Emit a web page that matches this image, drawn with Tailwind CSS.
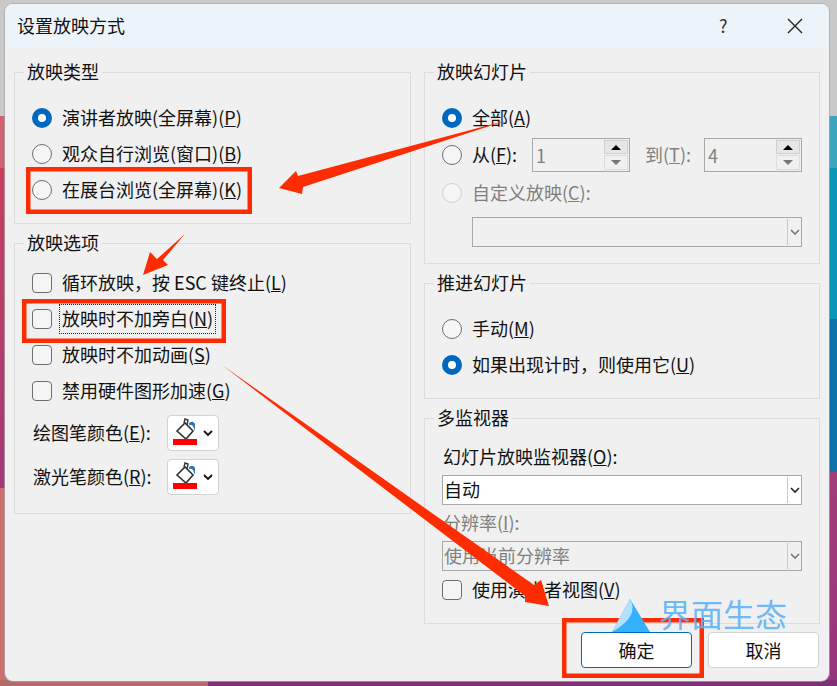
<!DOCTYPE html>
<html lang="zh-CN">
<head>
<meta charset="utf-8">
<script src="https://cdn.jsdelivr.net/npm/@tailwindcss/browser@4"></script>
</head>
<body class="relative w-[837px] h-[686px] overflow-hidden bg-[#c9c9c9] font-['Noto_Sans_CJK_SC','Noto_Sans',sans-serif] text-[18px] leading-[24px] text-[#111]">
  <!-- desktop wallpaper behind the window -->
  <div class="absolute left-0 top-[116px] w-[10px] h-[52px] bg-[#cf6272]"></div>
  <div class="absolute left-0 top-[168px] w-[10px] h-[320px] bg-[linear-gradient(#c8405f,#a03a78)]"></div>
  <div class="absolute left-0 top-[488px] w-[10px] h-[198px] bg-[#c9706c]"></div>
  <div class="absolute right-0 top-[116px] w-[12px] h-[52px] bg-[#3aa5bd]"></div>
  <div class="absolute right-0 top-[168px] w-[12px] h-[151px] bg-[#0a94b5]"></div>
  <div class="absolute right-0 top-[319px] w-[12px] h-[153px] bg-[#0a72a8]"></div>
  <div class="absolute right-0 top-[472px] w-[12px] h-[214px] bg-[linear-gradient(#a23d78,#96367e)]"></div>
  <div class="absolute left-0 top-[680px] w-[208px] h-[6px] bg-[#b56a6a]"></div>
  <div class="absolute left-[208px] right-0 top-[680px] h-[6px] bg-[#7f2f77]"></div>

  <!-- dialog -->
  <div class="absolute left-[4px] top-[3px] w-[826px] h-[679px] rounded-[9px] bg-[#a8a8a8]/70 p-px">
    <div class="w-full h-full rounded-[8px] overflow-hidden bg-[#f0f0f0] flex flex-col">
      <div class="h-[44px] shrink-0 bg-[#edf4f9] flex items-center pl-[12px] pb-[3px] relative">
        <span>设置放映方式</span>
        <span class="absolute left-[714px] top-[9px] text-[#333]">?</span>
        <svg class="absolute left-[781px] top-[13px]" width="18" height="18" viewBox="0 0 18 18"><path d="M2 2 L16 16 M16 2 L2 16" stroke="#222" stroke-width="1.4" fill="none"/></svg>
      </div>
      <div class="flex gap-[13px] pl-[9px] pt-[24px]">
        <!-- left column -->
        <div class="w-[397px] flex flex-col gap-[19px]">
          <section class="relative h-[152px] border border-[#dcdcdc] pl-[17px] pt-[27px]">
            <h2 class="absolute left-[9px] top-[-13px] px-[3px] bg-[#f0f0f0] font-normal leading-[22px] pb-[2px]">放映类型</h2>
            <div class="h-[36px] flex items-center gap-[10px]"><span class="w-[20px] h-[20px] rounded-full border-[6px] border-[#0067c0] bg-white"></span><span class="leading-[22px] pb-[2px]">演讲者放映(全屏幕)(<u>P</u>)</span></div>
            <div class="h-[36px] flex items-center gap-[10px]"><span class="w-[20px] h-[20px] rounded-full border-[1.5px] border-[#6e6e6e] bg-[#f5f5f5]"></span><span class="leading-[22px] pb-[2px]">观众自行浏览(窗口)(<u>B</u>)</span></div>
            <div class="h-[36px] flex items-center gap-[10px]"><span class="w-[20px] h-[20px] rounded-full border-[1.5px] border-[#6e6e6e] bg-[#f5f5f5]"></span><span class="leading-[22px] pb-[2px]">在展台浏览(全屏幕)(<u>K</u>)</span></div>
          </section>
          <section class="relative h-[271px] border border-[#dcdcdc] pl-[17px] pt-[21px]">
            <h2 class="absolute left-[9px] top-[-13px] px-[3px] bg-[#f0f0f0] font-normal leading-[22px] pb-[2px]">放映选项</h2>
            <div class="h-[36px] flex items-center gap-[10px]"><span class="w-[20px] h-[20px] rounded-[4px] border-[1.5px] border-[#6e6e6e] bg-[#f5f5f5]"></span><span class="leading-[22px] pb-[2px]">循环放映，按 ESC 键终止(<u>L</u>)</span></div>
            <div class="h-[36px] flex items-center gap-[10px]"><span class="w-[20px] h-[20px] rounded-[4px] border-[1.5px] border-[#6e6e6e] bg-[#f5f5f5]"></span><span class="leading-[22px] pb-[2px] outline-1 outline-dotted outline-[#222] outline-offset-[2px]">放映时不加旁白(<u>N</u>)</span></div>
            <div class="h-[36px] flex items-center gap-[10px]"><span class="w-[20px] h-[20px] rounded-[4px] border-[1.5px] border-[#6e6e6e] bg-[#f5f5f5]"></span><span class="leading-[22px] pb-[2px]">放映时不加动画(<u>S</u>)</span></div>
            <div class="h-[36px] flex items-center gap-[10px]"><span class="w-[20px] h-[20px] rounded-[4px] border-[1.5px] border-[#6e6e6e] bg-[#f5f5f5]"></span><span class="leading-[22px] pb-[2px]">禁用硬件图形加速(<u>G</u>)</span></div>
            <div class="flex items-center mt-[6px] h-[35px]">
              <span class="w-[135px] pl-px leading-[22px] pb-[2px]">绘图笔颜色(<u>E</u>):</span>
              <span class="w-[52px] h-[36px] rounded-[4px] border border-[#d2d2d2] bg-white flex items-center justify-center">
                <svg width="50" height="34" viewBox="0 0 50 34"><path d="M9 15 L17 7 L25 15 L18 23 Z" fill="#fff" stroke="#333" stroke-width="1.6"/><path d="M16 7 L17 3 L20 4 L19 9" fill="none" stroke="#333" stroke-width="1.4"/><path d="M21 7 Q25 4 27 8 L27 15 L25 10 Q23 8 21 9 Z" fill="#2a76b8"/><rect x="5" y="23" width="24" height="6" fill="#ff0000"/><path d="M36 15 L40 19 L44 15" fill="none" stroke="#111" stroke-width="1.8"/></svg>
              </span>
            </div>
            <div class="flex items-center mt-[9px] h-[36px]">
              <span class="w-[135px] pl-px leading-[22px] pb-[2px]">激光笔颜色(<u>R</u>):</span>
              <span class="w-[52px] h-[36px] rounded-[4px] border border-[#d2d2d2] bg-white flex items-center justify-center">
                <svg width="50" height="34" viewBox="0 0 50 34"><path d="M9 15 L17 7 L25 15 L18 23 Z" fill="#fff" stroke="#333" stroke-width="1.6"/><path d="M16 7 L17 3 L20 4 L19 9" fill="none" stroke="#333" stroke-width="1.4"/><path d="M21 7 Q25 4 27 8 L27 15 L25 10 Q23 8 21 9 Z" fill="#2a76b8"/><rect x="5" y="23" width="24" height="6" fill="#ff0000"/><path d="M36 15 L40 19 L44 15" fill="none" stroke="#111" stroke-width="1.8"/></svg>
              </span>
            </div>
          </section>
        </div>
        <!-- right column -->
        <div class="w-[396px] flex flex-col">
          <section class="relative h-[192px] border border-[#dcdcdc] pl-[17px] pt-[27px]">
            <h2 class="absolute left-[9px] top-[-13px] px-[3px] bg-[#f0f0f0] font-normal leading-[22px] pb-[2px]">放映幻灯片</h2>
            <div class="h-[36px] flex items-center gap-[10px]"><span class="w-[20px] h-[20px] rounded-full border-[6px] border-[#0067c0] bg-white"></span><span class="leading-[22px] pb-[2px]">全部(<u>A</u>)</span></div>
            <div class="h-[38px] flex items-center">
              <span class="w-[20px] h-[20px] rounded-full border-[1.5px] border-[#6e6e6e] bg-[#f5f5f5] mr-[10px]"></span>
              <span class="w-[60px] leading-[22px] pb-[2px]">从(<u>F</u>):</span>
              <span class="w-[98px] h-[34px] border border-[#a8a8a8] flex items-center pl-[3px] pr-px justify-between text-[#808080]">1
                <span class="w-[24px] h-[30px] flex flex-col gap-px">
                  <span class="h-[14px] bg-[#e6e6e6] border border-[#cfcfcf] flex items-center justify-center"><span class="w-0 h-0 border-x-[5px] border-x-transparent border-b-[5px] border-b-black"></span></span>
                  <span class="h-[15px] bg-[#f0f0f0] border border-[#dcdcdc] flex items-center justify-center"><span class="w-0 h-0 border-x-[5px] border-x-transparent border-t-[5px] border-t-[#777]"></span></span>
                </span>
              </span>
              <span class="w-[74px] pl-[15px] text-[#808080] leading-[22px] pb-[2px]">到(<u>T</u>):</span>
              <span class="w-[98px] h-[34px] border border-[#a8a8a8] flex items-center pl-[3px] pr-px justify-between text-[#808080]">4
                <span class="w-[24px] h-[30px] flex flex-col gap-px">
                  <span class="h-[14px] bg-[#e6e6e6] border border-[#cfcfcf] flex items-center justify-center"><span class="w-0 h-0 border-x-[5px] border-x-transparent border-b-[5px] border-b-black"></span></span>
                  <span class="h-[15px] bg-[#f0f0f0] border border-[#dcdcdc] flex items-center justify-center"><span class="w-0 h-0 border-x-[5px] border-x-transparent border-t-[5px] border-t-[#777]"></span></span>
                </span>
              </span>
            </div>
            <div class="h-[38px] flex items-center gap-[10px]"><span class="w-[20px] h-[20px] rounded-full border-[1.5px] border-[#d0d0d0] bg-[#f5f5f5]"></span><span class="text-[#808080] leading-[22px] pb-[2px]">自定义放映(<u>C</u>):</span></div>
            <div class="ml-[30px] w-[330px] h-[30px] mt-[5px] border border-[#a8a8a8] flex items-center justify-end">
              <span class="w-[14px] h-[26px] border-l border-[#c8c8c8] flex items-center justify-center"><svg width="10" height="6" viewBox="0 0 10 6"><path d="M1 1 L5 5 L9 1" fill="none" stroke="#777" stroke-width="1.6"/></svg></span>
            </div>
          </section>
          <section class="relative h-[116px] mt-[19px] border border-[#dcdcdc] pl-[17px] pt-[27px]">
            <h2 class="absolute left-[9px] top-[-13px] px-[3px] bg-[#f0f0f0] font-normal leading-[22px] pb-[2px]">推进幻灯片</h2>
            <div class="h-[36px] flex items-center gap-[10px]"><span class="w-[20px] h-[20px] rounded-full border-[1.5px] border-[#6e6e6e] bg-[#f5f5f5]"></span><span class="leading-[22px] pb-[2px]">手动(<u>M</u>)</span></div>
            <div class="h-[36px] flex items-center gap-[10px]"><span class="w-[20px] h-[20px] rounded-full border-[6px] border-[#0067c0] bg-white"></span><span class="leading-[22px] pb-[2px]">如果出现计时，则使用它(<u>U</u>)</span></div>
          </section>
          <section class="relative h-[206px] mt-[19px] border border-[#dcdcdc] pl-[17px] pt-[26px]">
            <h2 class="absolute left-[9px] top-[-13px] px-[3px] bg-[#f0f0f0] font-normal leading-[22px] pb-[2px]">多监视器</h2>
            <div class="h-[24px] pl-px leading-[22px]">幻灯片放映监视器(<u>O</u>):</div>
            <div class="w-[360px] h-[30px] mt-[6px] border border-[#a8a8a8] bg-white flex items-center justify-between pl-px">
              <span class="leading-[22px] pb-[2px]">自动</span>
              <span class="w-[14px] h-[26px] border-l border-[#c8c8c8] flex items-center justify-center"><svg width="10" height="6" viewBox="0 0 10 6"><path d="M1 1 L5 5 L9 1" fill="none" stroke="#222" stroke-width="1.6"/></svg></span>
            </div>
            <div class="h-[24px] mt-[6px] pl-px text-[#808080] leading-[22px]">分辨率(<u>I</u>):</div>
            <div class="w-[360px] h-[30px] mt-[6px] border border-[#a8a8a8] flex items-center justify-between pl-px text-[#808080]">
              <span class="leading-[22px] pb-[2px]">使用当前分辨率</span>
              <span class="w-[14px] h-[26px] border-l border-[#c8c8c8] flex items-center justify-center"><svg width="10" height="6" viewBox="0 0 10 6"><path d="M1 1 L5 5 L9 1" fill="none" stroke="#777" stroke-width="1.6"/></svg></span>
            </div>
            <div class="h-[30px] mt-[4px] flex items-center gap-[10px]"><span class="w-[20px] h-[20px] rounded-[4px] border-[1.5px] border-[#6e6e6e] bg-[#f5f5f5]"></span><span class="leading-[22px] pb-[2px]">使用演讲者视图(<u>V</u>)</span></div>
          </section>
          <div class="flex justify-end gap-[16px] mt-[8px] pr-px">
            <button class="w-[111px] h-[36px] rounded-[4px] border border-[#0067c0] bg-white text-[#111]">确定</button>
            <button class="w-[111px] h-[36px] rounded-[4px] border border-[#d2d2d2] bg-white text-[#111]">取消</button>
          </div>
        </div>
      </div>
    </div>
  </div>

  <!-- red annotations drawn over the window -->
  <svg class="absolute inset-0 pointer-events-none" width="837" height="686" viewBox="0 0 837 686">
    <g fill="none" stroke="#fe2c02" stroke-width="4.5">
      <rect x="28.25" y="169.25" width="221.5" height="42.5"/>
      <rect x="24.25" y="301.25" width="199.5" height="39.5"/>
      <rect x="564.25" y="620.25" width="137.5" height="55.5"/>
    </g>
    <g fill="#fe2c02">
      <polygon points="279,188 296,171 298,176 508,120 303,187 302,194"/>
      <polygon points="143,275 150,252 157,259 185,234 163,260 168,265"/>
      <polygon points="222,365 534,585 541,580 549,606 525,602 525,596"/>
    </g>
    <polygon points="630,599 650,632 612,632" fill="#33b1ff"/>
    <path d="M630 599 Q640 616 612 632 L625 608 Z" fill="#b4e0ff"/>
  </svg>
  <div class="absolute left-[659px] top-[595px] text-[32px] leading-[36px] text-[#5db2f7]/90 pointer-events-none">界面生态</div>
</body>
</html>
